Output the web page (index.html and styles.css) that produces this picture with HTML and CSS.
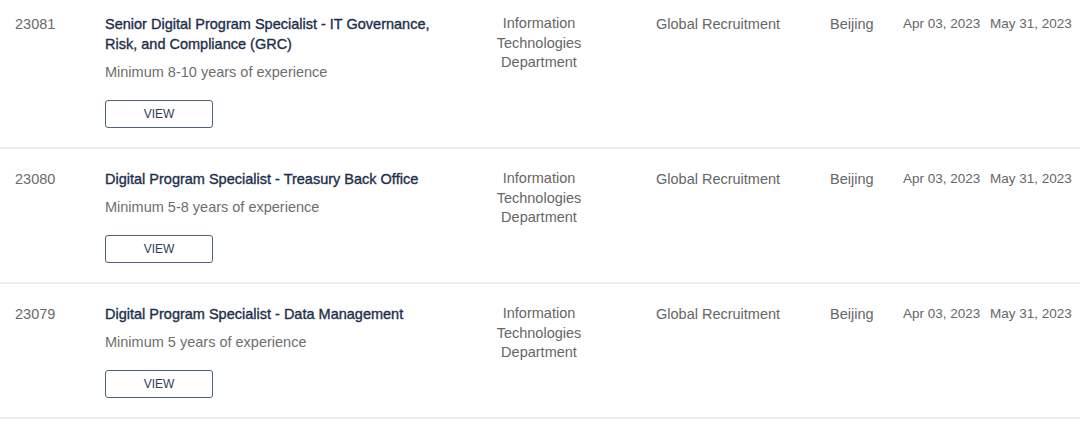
FILE: index.html
```html
<!DOCTYPE html>
<html lang="en">
<head>
    <meta charset="UTF-8">
    <meta name="viewport" content="width=device-width, initial-scale=1.0">
    <title>Job Openings</title>
    <link rel="stylesheet" href="styles.css">
</head>
<body>
    <div class="job-list">
        <div class="job-row">
            <div class="job-id">23081</div>
            <div class="job-main">
                <div class="job-title">Senior Digital Program Specialist - IT Governance, Risk, and Compliance (GRC)</div>
                <div class="job-req">Minimum 8-10 years of experience</div>
                <a class="view-btn" href="#">VIEW</a>
            </div>
            <div class="job-dept">Information Technologies Department</div>
            <div class="job-type">Global Recruitment</div>
            <div class="job-city">Beijing</div>
            <div class="job-date">Apr 03, 2023</div>
            <div class="job-date">May 31, 2023</div>
        </div>

        <div class="job-row">
            <div class="job-id">23080</div>
            <div class="job-main">
                <div class="job-title">Digital Program Specialist - Treasury Back Office</div>
                <div class="job-req">Minimum 5-8 years of experience</div>
                <a class="view-btn" href="#">VIEW</a>
            </div>
            <div class="job-dept">Information Technologies Department</div>
            <div class="job-type">Global Recruitment</div>
            <div class="job-city">Beijing</div>
            <div class="job-date">Apr 03, 2023</div>
            <div class="job-date">May 31, 2023</div>
        </div>

        <div class="job-row">
            <div class="job-id">23079</div>
            <div class="job-main">
                <div class="job-title">Digital Program Specialist - Data Management</div>
                <div class="job-req">Minimum 5 years of experience</div>
                <a class="view-btn" href="#">VIEW</a>
            </div>
            <div class="job-dept">Information Technologies Department</div>
            <div class="job-type">Global Recruitment</div>
            <div class="job-city">Beijing</div>
            <div class="job-date">Apr 03, 2023</div>
            <div class="job-date">May 31, 2023</div>
        </div>
    </div>
</body>
</html>
```

FILE: styles.css
```css
/* Job list */
body {
    font-family: "Liberation Sans", Arial, sans-serif;
    margin: 0;
    padding: 0;
    background-color: #fff;
    color: #666;
}

.job-list {
    margin-top: -6px;
}

.job-row {
    display: grid;
    grid-template-columns: 90px 370px 181px 174px 73px 87px 90px;
    padding: 20px 0 19px 15px;
    border-bottom: 2px solid #ededed;
    font-size: 14.5px;
    line-height: 20px;
}

.job-id {
    color: #6b6b6b;
}

.job-title {
    font-size: 14.5px;
    color: #1d2f4c;
    -webkit-text-stroke: 0.35px #1d2f4c;
    padding-right: 20px;
}

.job-req {
    margin-top: 8px;
    color: #6e6e6e;
}

.view-btn {
    display: block;
    width: 106px;
    height: 26px;
    margin-top: 18px;
    border: 1px solid #4f627a;
    border-radius: 3px;
    color: #2c3d58;
    font-size: 12px;
    line-height: 26px;
    text-align: center;
    text-decoration: none;
}

.job-dept {
    padding-right: 53px;
    text-align: center;
    line-height: 19.5px;
    color: #666;
}

.job-type,
.job-city {
    color: #666;
}

.job-date {
    font-size: 13.5px;
    color: #666;
}
```
